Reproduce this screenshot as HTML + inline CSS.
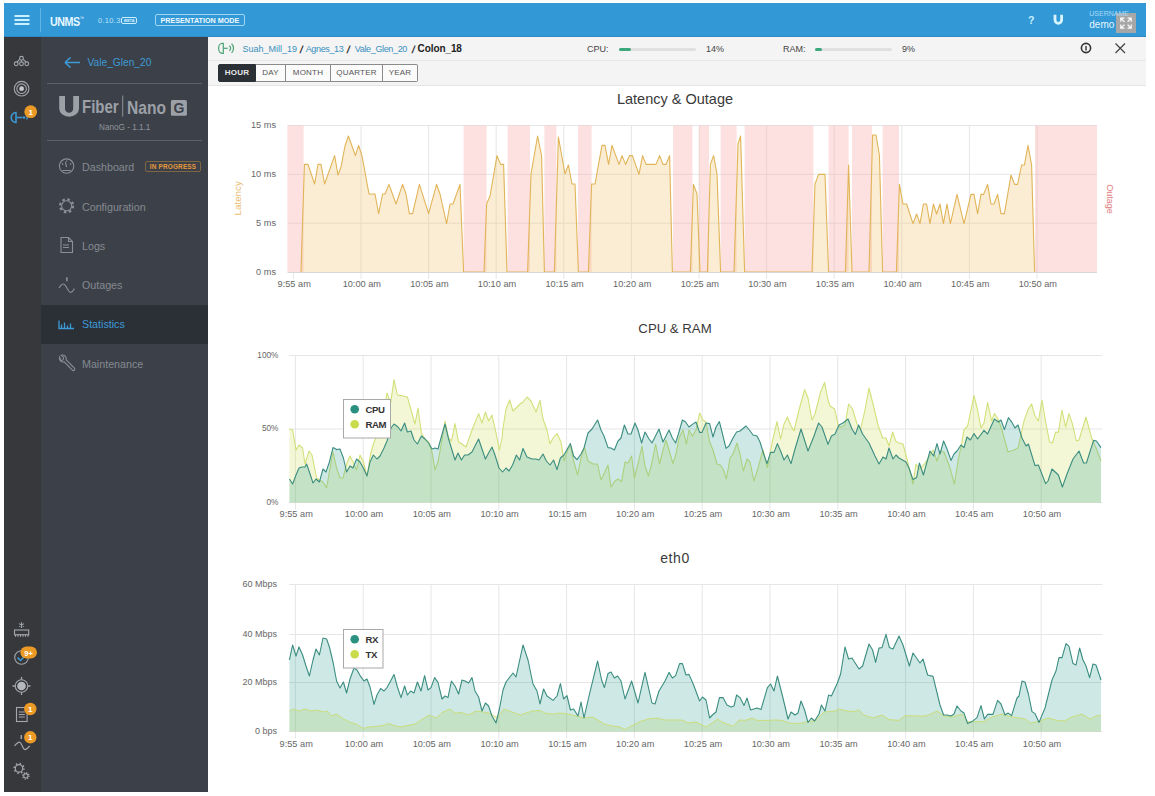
<!DOCTYPE html>
<html><head><meta charset="utf-8">
<style>
*{box-sizing:border-box;margin:0;padding:0}
html,body{width:1155px;height:796px;overflow:hidden;background:#fff;font-family:"Liberation Sans",sans-serif}
.abs{position:absolute}
#hdr{left:4px;top:3px;width:1142px;height:34px;background:#3298d6;border-bottom:1px solid #2e8ac4}
#ibar{left:4px;top:37px;width:37px;height:755px;background:#37383c}
#nav{left:41px;top:37px;width:167px;height:755px;background:#3c4149}
#content{left:208px;top:37px;width:938px;height:755px;background:#fff}
#crumbbar{left:208px;top:37px;width:938px;height:49px;background:#f4f4f4;border-bottom:1px solid #e4e4e4}
#crumbline{left:208px;top:60px;width:938px;height:1px;background:#e8e8e8}
.t{position:absolute;white-space:nowrap;line-height:1}
.menu{position:absolute;left:82px;font-size:10.7px;color:#858990}
.btn{position:absolute;top:64px;height:18px;border:1px solid #8a8a8a;border-left:none;background:#fbfbfb;color:#555;font-size:8px;text-align:center;line-height:16px;letter-spacing:0.2px}
svg{position:absolute;overflow:visible}
</style></head><body>
<div id="hdr" class="abs"></div>
<div id="ibar" class="abs"></div>
<div id="nav" class="abs"></div>
<div id="content" class="abs"></div>
<div id="crumbbar" class="abs"></div>
<div id="crumbline" class="abs"></div>

<!-- header -->
<svg style="left:0;top:0" width="1155" height="40">
  <g stroke="#c9f0ff" stroke-width="2">
    <line x1="14.5" y1="16" x2="29.5" y2="16"/><line x1="14.5" y1="20" x2="29.5" y2="20"/><line x1="14.5" y1="24" x2="29.5" y2="24"/>
  </g>
  <line x1="40.5" y1="8" x2="40.5" y2="32" stroke="#5fb5e6" stroke-width="1"/>
  <rect x="121.5" y="17.5" width="15" height="6" rx="1.5" fill="none" stroke="#cdeeff" stroke-width="1"/>
  <rect x="155.5" y="14.5" width="89" height="11" rx="1.5" fill="none" stroke="#9fd6f5" stroke-width="1"/>
  <rect x="1116" y="13" width="20" height="20" fill="#a7a7a7"/>
  <path d="M1055 14.8 v5 a3.3 3.6 0 0 0 6.6 0 v-5" stroke="#d8f4ff" stroke-width="2.8" fill="none"/>
  <g stroke="#fff" stroke-width="1.2" fill="none">
    <path d="M1120.8 21.8V18.2H1124.4M1121.2 18.6l3.2 3.2"/>
    <path d="M1131.2 21.8V18.2H1127.6M1130.8 18.6l-3.2 3.2"/>
    <path d="M1120.8 24.6V28.2H1124.4M1121.2 27.8l3.2 -3.2"/>
    <path d="M1131.2 24.6V28.2H1127.6M1130.8 27.8l-3.2 -3.2"/>
  </g>
  <circle cx="1086" cy="48" r="4.6" fill="none" stroke="#333" stroke-width="1.6"/>
  <line x1="1086" y1="46" x2="1086" y2="50.5" stroke="#333" stroke-width="1.4"/>
  <g stroke="#444" stroke-width="1.3"><line x1="1115.5" y1="43.5" x2="1125" y2="53"/><line x1="1125" y1="43.5" x2="1115.5" y2="53"/></g>
</svg>
<div class="t" style="left:50px;top:15.5px;font-size:12.8px;font-weight:700;color:#e6f7ff;letter-spacing:-0.6px;transform:scaleX(0.84);transform-origin:0 0">UNMS<span style="font-size:5px;vertical-align:top;font-weight:400">™</span></div>
<div class="t" style="left:98px;top:17px;font-size:7.5px;color:#bfe3f7;letter-spacing:0.3px">0.10.3</div>
<div class="t" style="left:124px;top:18.5px;font-size:4px;font-weight:700;color:#dff4ff">BETA</div>
<div class="t" style="left:160.5px;top:16.8px;font-size:7.2px;font-weight:700;color:#f1faff;letter-spacing:0px">PRESENTATION MODE</div>
<div class="t" style="left:1028px;top:14.8px;font-size:10.5px;color:#c9f0ff;font-weight:700">?</div>

<div class="t" style="left:1089.3px;top:10.2px;font-size:7px;color:#a9dcf7">USERNAME</div>
<div class="t" style="left:1089.3px;top:20px;font-size:10px;color:#e6f6ff">demo</div>

<!-- breadcrumb -->
<svg style="left:0;top:0" width="1155" height="90">
  <g fill="none" stroke="#4fa57a" stroke-width="1.25">
    <path d="M223.3 43.3 h-1.3 a3.4 5 0 0 0 0 10 h1.3 z"/>
    <path d="M223.5 48.3 h4.2"/>
    <path d="M229.4 45.8 a3.2 3.2 0 0 1 0 5"/>
    <path d="M231.6 43.6 a6.5 6.5 0 0 1 0 9.2"/>
  </g>
</svg>
<div class="t" style="left:242.6px;top:44.6px;font-size:9px;color:#3a8fc0">Suah_Mill_19</div>
<div class="t" style="left:299.5px;top:44px;font-size:10.5px;color:#333;font-weight:700;transform:skewX(-12deg)">/</div>
<div class="t" style="left:305.7px;top:44.6px;font-size:9px;color:#3a8fc0;letter-spacing:-0.35px">Agnes_13</div>
<div class="t" style="left:347.3px;top:44px;font-size:10.5px;color:#333;font-weight:700;transform:skewX(-12deg)">/</div>
<div class="t" style="left:354.8px;top:44.6px;font-size:9px;color:#3a8fc0;letter-spacing:-0.35px">Vale_Glen_20</div>
<div class="t" style="left:412.3px;top:44px;font-size:10.5px;color:#333;font-weight:700;transform:skewX(-12deg)">/</div>
<div class="t" style="left:417.6px;top:44px;font-size:10px;color:#222;font-weight:700;letter-spacing:-0.1px">Colon_18</div>

<div class="t" style="left:587px;top:45px;font-size:9px;color:#444">CPU:</div>
<div class="abs" style="left:619px;top:48px;width:77px;height:3px;background:#e0e0e0;border-radius:2px"></div>
<div class="abs" style="left:619px;top:48px;width:12px;height:3px;background:#3aa87a;border-radius:2px"></div>
<div class="t" style="left:706px;top:45px;font-size:9px;color:#444">14%</div>
<div class="t" style="left:783px;top:45px;font-size:9px;color:#444">RAM:</div>
<div class="abs" style="left:815px;top:48px;width:77px;height:3px;background:#e0e0e0;border-radius:2px"></div>
<div class="abs" style="left:815px;top:48px;width:7px;height:3px;background:#3aa87a;border-radius:2px"></div>
<div class="t" style="left:902px;top:45px;font-size:9px;color:#444">9%</div>

<div class="btn" style="left:218px;width:38px;border-left:1px solid #2b2f36;background:#2b2f36;color:#e8e8e8;font-weight:700;border-color:#2b2f36;border-radius:2px 0 0 2px">HOUR</div>
<div class="btn" style="left:256px;width:30px">DAY</div>
<div class="btn" style="left:285px;width:46px;border-left:1px solid #8a8a8a">MONTH</div>
<div class="btn" style="left:331px;width:52px">QUARTER</div>
<div class="btn" style="left:383px;width:35px;border-radius:0 2px 2px 0">YEAR</div>

<!-- nav panel -->
<div class="abs" style="left:47px;top:82.5px;width:155px;height:1px;background:#5b6069"></div>
<div class="abs" style="left:47px;top:140px;width:155px;height:1px;background:#5b6069"></div>
<div class="abs" style="left:41px;top:305px;width:167px;height:39px;background:#2b2f36"></div>
<svg style="left:0;top:0" width="210" height="796">
  <path d="M65 62.5h15M65 62.5l5.5-5M65 62.5l5.5 5" stroke="#3d9ad6" stroke-width="1.6" fill="none"/>
</svg>
<div class="t" style="left:87.5px;top:57.5px;font-size:10.2px;color:#3d9ad6">Vale_Glen_20</div>
<div class="t" style="left:99px;top:123.5px;font-size:8.2px;color:#8f939a">NanoG - 1.1.1</div>
<div class="menu t" style="top:161.5px">Dashboard</div>
<div class="t" style="left:145px;top:161px;width:56px;height:11px;border:1px solid #7f6642;border-radius:2px;font-size:6.4px;font-weight:700;color:#e69a3a;text-align:center;line-height:9px;letter-spacing:0.2px">IN PROGRESS</div>
<div class="menu t" style="top:201.5px">Configuration</div>
<div class="menu t" style="top:240.5px">Logs</div>
<div class="menu t" style="top:280px">Outages</div>
<div class="menu t" style="top:319px;color:#3d9ad6">Statistics</div>
<div class="menu t" style="top:358.5px">Maintenance</div>


<!-- icon bar icons -->
<svg style="left:0;top:0" width="45" height="796">
  <g fill="none" stroke="#a3a6ab" stroke-width="1.1">
    <circle cx="21.5" cy="58.3" r="1.9"/>
    <circle cx="16.2" cy="63.8" r="1.9"/><circle cx="21.5" cy="63.8" r="1.9"/><circle cx="26.8" cy="63.8" r="1.9"/>
    <path d="M19.8 59.3 L17 62 M23.2 59.3 L26 62 M21.5 60.2 V61.9"/>
    <circle cx="21.6" cy="88.7" r="7.3"/>
    <circle cx="21.6" cy="88.7" r="4.8"/>
  </g>
  <circle cx="21.6" cy="88.7" r="2.4" fill="#c8cacd"/>
  <g fill="none" stroke="#3d9ad6" stroke-width="1.5">
    <path d="M16 112.5 a4.8 5 0 0 0 0 10 z"/>
    <path d="M16.5 117.5 h6"/>
  </g>
  <circle cx="24" cy="117.5" r="1.3" fill="#3d9ad6"/>
  <path d="M26.5 115.5 a3 3 0 0 1 0 4" stroke="#3d9ad6" stroke-width="1.2" fill="none"/>
  <circle cx="30.7" cy="111.7" r="6.4" fill="#eb9a25"/>
  <text x="30.7" y="114.6" font-family="Liberation Sans" font-size="8" font-weight="700" fill="#fff" text-anchor="middle">1</text>

  <g fill="none" stroke="#a3a6ab" stroke-width="1.1">
    <path d="M21.5 622.2 v5.8 M19 623.6 l5 3 M24 623.6 l-5 3"/>
    <rect x="14.5" y="630" width="14.2" height="4.7"/>
    <path d="M15.5 634.7 v2 M18 634.7 v2 M20.5 634.7 v2 M23 634.7 v2 M25.5 634.7 v2 M28 634.7 v2"/>
    <circle cx="21.5" cy="657.5" r="6.8"/>
  </g>
  <path d="M17.5 657.5 l3 3 l5 -5" stroke="#3d9ad6" stroke-width="1.5" fill="none"/>
  <rect x="20.4" y="646.5" width="16.5" height="12" rx="6" fill="#eb9a25"/>
  <text x="28.6" y="655.5" font-family="Liberation Sans" font-size="7.5" font-weight="700" fill="#fff" text-anchor="middle">9+</text>
  <circle cx="21.5" cy="686" r="6.3" fill="none" stroke="#a3a6ab" stroke-width="1.1"/>
  <circle cx="21.5" cy="686" r="4.3" fill="#b5b8bc"/>
  <path d="M21.5 677 v3 M21.5 692 v3 M12.5 686 h3 M27.5 686 h3" stroke="#a3a6ab" stroke-width="1.3"/>
  <g fill="none" stroke="#a3a6ab" stroke-width="1.1">
    <rect x="16.5" y="707.5" width="10.6" height="14"/>
    <path d="M18.8 712 h6 M18.8 714.5 h6 M18.8 717 h6"/>
  </g>
  <circle cx="30.3" cy="709" r="6.2" fill="#eb9a25"/>
  <text x="30.3" y="711.9" font-family="Liberation Sans" font-size="8" font-weight="700" fill="#fff" text-anchor="middle">1</text>
  <g fill="none" stroke="#a3a6ab" stroke-width="1.2">
    <path d="M14.5 745.8 C16.5 743.5 18.3 741.5 19.8 742.2 C21.8 743.2 23 749.8 24.9 749.6 C26.8 749.4 28.5 747.3 29.8 745.8"/>
    <path d="M21.3 735 v4" stroke-width="1.5"/>
  </g>
  <circle cx="30.3" cy="737.3" r="6.2" fill="#eb9a25"/>
  <text x="30.3" y="740.2" font-family="Liberation Sans" font-size="8" font-weight="700" fill="#fff" text-anchor="middle">1</text>
  <g fill="none" stroke="#a3a6ab">
    <circle cx="19" cy="768.4" r="3.7" stroke-width="1.2"/>
    <circle cx="19" cy="768.4" r="4.9" stroke-width="1.5" stroke-dasharray="1.5 2.35"/>
    <circle cx="25.8" cy="775.8" r="2.2" stroke-width="1.1"/>
    <circle cx="25.8" cy="775.8" r="3.2" stroke-width="1.3" stroke-dasharray="1.1 1.41"/>
  </g>
</svg>

<!-- logo -->
<svg style="left:0;top:0" width="210" height="140">
  <path d="M59.2 96 h5.8 v12.5 a4 4.2 0 0 0 8.2 0 v-12.5 h5.8 v12.5 a9.9 8.3 0 0 1 -19.8 0 z" fill="#9ca0a7"/>
  <rect x="122.2" y="95.6" width="1" height="21" fill="#8d9198"/>
  <rect x="170.9" y="100" width="16" height="15.7" rx="1.5" fill="#9ca0a7"/>
</svg>
<div class="t" style="left:82px;top:96.6px;font-size:19px;font-weight:700;color:#9ca0a7;transform:scaleX(0.79);transform-origin:0 0">Fiber</div>
<div class="t" style="left:127px;top:97.5px;font-size:19px;font-weight:700;color:#9ca0a7;transform:scaleX(0.82);transform-origin:0 0">Nano</div>
<div class="t" style="left:173.5px;top:101.3px;font-size:14px;font-weight:700;color:#3c4149">G</div>

<!-- menu icons -->
<svg style="left:0;top:0" width="210" height="400">
  <g fill="none" stroke="#8b9098" stroke-width="1.1">
    <circle cx="66.6" cy="166.1" r="7.2"/>
    <path d="M66.6 167 l-1.2 -5 M62 163.5 l1.2 1 M71.2 163.5 l-1.2 1 M66.6 160.5 v1.2 M62.5 170.5 h8.2"/>
    <circle cx="66.6" cy="205.8" r="5"/>
    <circle cx="66.6" cy="205.8" r="6.5" stroke-width="2.2" stroke-dasharray="2.55 2.55"/>
    <path d="M61 237.5 h7.5 l4 4 v11 h-11.5 z M68.5 237.5 v4 h4"/>
    <path d="M63 245 h6 M63 247.5 h6"/>
    <path d="M59 288 C61 285 62.5 283.2 64.3 284.4 C66.5 286 68.5 292.5 70.8 292.4 C72.6 292.3 73.6 290 74.3 288.6"/>
    <path d="M66.9 277.3 v4" stroke-width="1.6"/>
    <path d="M59.6 357 a3.8 3.8 0 0 0 4.6 4.9 l8.2 8.2 a1.4 1.4 0 0 0 2 -2 l-8.2 -8.2 a3.8 3.8 0 0 0 -4.9 -4.6 l2.4 2.4 l-0.7 2.2 l-2.2 0.7 z"/>
  </g>
  <path d="M59 320.5 v8 h15 M61.5 328.5 v-4 M64.5 328.5 v-6 M67.5 328.5 v-3 M70.5 328.5 v-5" stroke="#3d9ad6" stroke-width="1.3" fill="none"/>
</svg>

<svg style="left:0;top:0" width="1155" height="796">
<line x1="287.5" y1="125.5" x2="1097" y2="125.5" stroke="#e6e6e6" stroke-width="1"/>
<line x1="287.5" y1="174.3" x2="1097" y2="174.3" stroke="#e6e6e6" stroke-width="1"/>
<line x1="287.5" y1="223.2" x2="1097" y2="223.2" stroke="#e6e6e6" stroke-width="1"/>
<line x1="293.4" y1="272" x2="293.4" y2="279" stroke="#e6e6e6" stroke-width="1"/>
<line x1="361.0" y1="125.5" x2="361.0" y2="279" stroke="#e6e6e6" stroke-width="1"/>
<line x1="428.6" y1="125.5" x2="428.6" y2="279" stroke="#e6e6e6" stroke-width="1"/>
<line x1="496.2" y1="125.5" x2="496.2" y2="279" stroke="#e6e6e6" stroke-width="1"/>
<line x1="563.8" y1="125.5" x2="563.8" y2="279" stroke="#e6e6e6" stroke-width="1"/>
<line x1="631.4" y1="125.5" x2="631.4" y2="279" stroke="#e6e6e6" stroke-width="1"/>
<line x1="699.0" y1="125.5" x2="699.0" y2="279" stroke="#e6e6e6" stroke-width="1"/>
<line x1="766.6" y1="125.5" x2="766.6" y2="279" stroke="#e6e6e6" stroke-width="1"/>
<line x1="834.2" y1="125.5" x2="834.2" y2="279" stroke="#e6e6e6" stroke-width="1"/>
<line x1="901.8" y1="125.5" x2="901.8" y2="279" stroke="#e6e6e6" stroke-width="1"/>
<line x1="969.4" y1="125.5" x2="969.4" y2="279" stroke="#e6e6e6" stroke-width="1"/>
<line x1="1037.0" y1="125.5" x2="1037.0" y2="279" stroke="#e6e6e6" stroke-width="1"/>
<rect x="287.4" y="125.5" width="16.2" height="146.5" fill="rgba(250,165,165,0.34)"/>
<rect x="463.6" y="125.5" width="23.0" height="146.5" fill="rgba(250,165,165,0.34)"/>
<rect x="507.6" y="125.5" width="22.4" height="146.5" fill="rgba(250,165,165,0.34)"/>
<rect x="544.4" y="125.5" width="12.0" height="146.5" fill="rgba(250,165,165,0.34)"/>
<rect x="578.0" y="125.5" width="13.6" height="146.5" fill="rgba(250,165,165,0.34)"/>
<rect x="673.0" y="125.5" width="19.4" height="146.5" fill="rgba(250,165,165,0.34)"/>
<rect x="699.0" y="125.5" width="10.0" height="146.5" fill="rgba(250,165,165,0.34)"/>
<rect x="720.6" y="125.5" width="16.0" height="146.5" fill="rgba(250,165,165,0.34)"/>
<rect x="744.6" y="125.5" width="68.8" height="146.5" fill="rgba(250,165,165,0.34)"/>
<rect x="828.6" y="125.5" width="20.0" height="146.5" fill="rgba(250,165,165,0.34)"/>
<rect x="852.0" y="125.5" width="20.0" height="146.5" fill="rgba(250,165,165,0.34)"/>
<rect x="882.6" y="125.5" width="16.4" height="146.5" fill="rgba(250,165,165,0.34)"/>
<rect x="1035.0" y="125.5" width="62.0" height="146.5" fill="rgba(250,165,165,0.34)"/>
<polygon points="301.0,272.0 301.0,272.0 304.4,164.4 308.0,164.4 314.6,184.0 318.0,164.4 321.0,164.4 324.6,184.0 334.6,155.6 338.0,175.0 341.0,167.0 345.0,146.0 348.4,136.0 355.4,155.6 358.6,145.4 362.0,156.0 369.0,194.0 375.0,194.0 378.6,213.6 382.6,194.0 385.0,194.0 389.0,184.4 396.0,204.0 402.6,184.4 406.0,194.0 409.4,213.6 412.6,213.6 419.4,184.4 428.6,213.6 436.6,184.4 440.0,194.0 446.6,223.6 450.0,204.0 453.0,204.0 460.0,184.4 463.6,272.0 484.0,272.0 486.6,204.0 490.0,196.0 497.0,155.6 500.6,164.4 503.6,164.4 507.0,272.0 527.6,272.0 531.0,174.0 537.6,136.0 541.6,156.0 544.4,272.0 554.4,272.0 558.4,137.0 565.0,174.0 568.4,165.0 572.0,184.0 575.0,184.0 578.4,272.0 588.4,272.0 591.6,184.0 595.0,184.0 602.0,145.4 605.0,145.4 608.6,164.4 612.0,145.4 619.0,164.4 622.0,155.6 625.6,164.4 629.6,155.6 632.4,155.6 639.0,174.4 642.6,155.6 646.0,164.4 656.0,164.4 659.6,155.6 663.0,164.4 666.0,164.4 669.6,155.6 672.4,272.0 690.4,272.0 693.4,184.4 697.0,194.0 700.0,272.0 707.4,272.0 710.4,164.4 713.6,155.6 717.0,174.0 720.6,272.0 734.0,272.0 738.0,144.0 740.6,136.0 744.6,272.0 812.0,272.0 815.0,184.0 818.6,174.4 825.0,174.4 828.6,272.0 845.4,272.0 848.6,165.0 852.0,272.0 869.0,272.0 872.6,135.0 876.0,135.0 879.4,155.0 882.6,272.0 896.4,272.0 899.4,184.4 903.0,204.0 906.6,204.0 913.0,223.6 916.6,214.0 920.0,223.6 923.4,204.0 926.6,204.0 930.0,223.6 933.4,204.0 936.6,214.0 940.0,204.0 943.4,223.6 947.0,204.0 950.4,223.6 957.0,194.4 964.0,223.6 971.0,194.4 974.0,194.4 977.6,213.6 981.0,194.4 983.6,194.4 987.6,184.4 991.0,204.0 994.0,204.0 997.6,194.4 1001.0,213.6 1004.4,213.6 1011.0,175.0 1014.6,184.4 1017.6,184.4 1021.6,165.0 1024.4,165.0 1028.0,145.4 1031.6,165.0 1034.6,272.0 1034.6,272.0" fill="rgba(243,196,110,0.30)"/>
<polyline points="301.0,272.0 304.4,164.4 308.0,164.4 314.6,184.0 318.0,164.4 321.0,164.4 324.6,184.0 334.6,155.6 338.0,175.0 341.0,167.0 345.0,146.0 348.4,136.0 355.4,155.6 358.6,145.4 362.0,156.0 369.0,194.0 375.0,194.0 378.6,213.6 382.6,194.0 385.0,194.0 389.0,184.4 396.0,204.0 402.6,184.4 406.0,194.0 409.4,213.6 412.6,213.6 419.4,184.4 428.6,213.6 436.6,184.4 440.0,194.0 446.6,223.6 450.0,204.0 453.0,204.0 460.0,184.4 463.6,272.0 484.0,272.0 486.6,204.0 490.0,196.0 497.0,155.6 500.6,164.4 503.6,164.4 507.0,272.0 527.6,272.0 531.0,174.0 537.6,136.0 541.6,156.0 544.4,272.0 554.4,272.0 558.4,137.0 565.0,174.0 568.4,165.0 572.0,184.0 575.0,184.0 578.4,272.0 588.4,272.0 591.6,184.0 595.0,184.0 602.0,145.4 605.0,145.4 608.6,164.4 612.0,145.4 619.0,164.4 622.0,155.6 625.6,164.4 629.6,155.6 632.4,155.6 639.0,174.4 642.6,155.6 646.0,164.4 656.0,164.4 659.6,155.6 663.0,164.4 666.0,164.4 669.6,155.6 672.4,272.0 690.4,272.0 693.4,184.4 697.0,194.0 700.0,272.0 707.4,272.0 710.4,164.4 713.6,155.6 717.0,174.0 720.6,272.0 734.0,272.0 738.0,144.0 740.6,136.0 744.6,272.0 812.0,272.0 815.0,184.0 818.6,174.4 825.0,174.4 828.6,272.0 845.4,272.0 848.6,165.0 852.0,272.0 869.0,272.0 872.6,135.0 876.0,135.0 879.4,155.0 882.6,272.0 896.4,272.0 899.4,184.4 903.0,204.0 906.6,204.0 913.0,223.6 916.6,214.0 920.0,223.6 923.4,204.0 926.6,204.0 930.0,223.6 933.4,204.0 936.6,214.0 940.0,204.0 943.4,223.6 947.0,204.0 950.4,223.6 957.0,194.4 964.0,223.6 971.0,194.4 974.0,194.4 977.6,213.6 981.0,194.4 983.6,194.4 987.6,184.4 991.0,204.0 994.0,204.0 997.6,194.4 1001.0,213.6 1004.4,213.6 1011.0,175.0 1014.6,184.4 1017.6,184.4 1021.6,165.0 1024.4,165.0 1028.0,145.4 1031.6,165.0 1034.6,272.0" fill="none" stroke="#e1b458" stroke-width="1.1" stroke-linejoin="round"/>
<line x1="287.5" y1="272.5" x2="1097" y2="272.5" stroke="#d8d8d8" stroke-width="1"/>
<line x1="289" y1="355.5" x2="1102.5" y2="355.5" stroke="#e6e6e6" stroke-width="1"/>
<line x1="289" y1="429.0" x2="1102.5" y2="429.0" stroke="#e6e6e6" stroke-width="1"/>
<line x1="289" y1="502.5" x2="1102.5" y2="502.5" stroke="#e6e6e6" stroke-width="1"/>
<line x1="295.4" y1="355.5" x2="295.4" y2="509.5" stroke="#e6e6e6" stroke-width="1"/>
<line x1="363.2" y1="355.5" x2="363.2" y2="509.5" stroke="#e6e6e6" stroke-width="1"/>
<line x1="431.0" y1="355.5" x2="431.0" y2="509.5" stroke="#e6e6e6" stroke-width="1"/>
<line x1="498.8" y1="355.5" x2="498.8" y2="509.5" stroke="#e6e6e6" stroke-width="1"/>
<line x1="566.6" y1="355.5" x2="566.6" y2="509.5" stroke="#e6e6e6" stroke-width="1"/>
<line x1="634.4" y1="355.5" x2="634.4" y2="509.5" stroke="#e6e6e6" stroke-width="1"/>
<line x1="702.2" y1="355.5" x2="702.2" y2="509.5" stroke="#e6e6e6" stroke-width="1"/>
<line x1="770.0" y1="355.5" x2="770.0" y2="509.5" stroke="#e6e6e6" stroke-width="1"/>
<line x1="837.8" y1="355.5" x2="837.8" y2="509.5" stroke="#e6e6e6" stroke-width="1"/>
<line x1="905.6" y1="355.5" x2="905.6" y2="509.5" stroke="#e6e6e6" stroke-width="1"/>
<line x1="973.4" y1="355.5" x2="973.4" y2="509.5" stroke="#e6e6e6" stroke-width="1"/>
<line x1="1041.2" y1="355.5" x2="1041.2" y2="509.5" stroke="#e6e6e6" stroke-width="1"/>
<polygon points="289.4,502.5 289.4,429.0 292.6,430.0 296.0,450.0 299.0,445.0 302.6,448.0 305.0,464.0 309.0,451.0 312.0,455.0 316.6,478.0 319.4,480.0 323.0,482.0 326.6,488.0 329.4,472.0 333.0,452.0 336.6,468.0 340.0,478.0 343.0,478.0 346.6,464.0 350.0,456.0 353.0,462.0 356.6,470.0 360.0,455.0 363.4,462.0 367.0,476.0 370.6,454.0 374.0,442.0 378.0,434.0 381.0,420.0 384.6,408.0 387.0,393.0 390.6,403.0 394.0,379.6 397.4,395.0 401.0,395.6 407.4,397.0 415.0,424.0 418.0,408.0 421.4,433.0 425.0,439.0 428.6,442.0 432.0,452.0 435.0,470.0 438.0,462.0 442.0,440.0 445.0,421.0 448.6,438.0 451.4,441.0 455.0,423.6 458.6,442.0 462.0,444.0 466.0,447.0 472.0,430.0 478.6,413.6 482.0,423.0 485.4,412.0 488.6,421.0 492.0,415.0 495.4,430.0 499.4,450.0 502.0,438.0 503.0,428.0 506.0,409.0 509.6,400.0 513.0,411.0 517.0,407.0 520.0,404.0 523.0,402.0 527.0,397.0 531.0,401.0 536.0,412.0 540.0,400.4 543.0,419.0 547.0,430.0 550.0,444.0 553.0,438.0 557.0,433.6 561.0,442.0 564.0,461.0 567.6,450.0 570.4,446.0 573.6,461.0 577.6,475.0 581.0,458.0 584.4,447.0 588.0,461.0 593.0,464.0 597.6,464.0 601.0,480.0 604.4,473.0 608.0,465.0 611.0,487.0 615.0,481.0 618.0,479.0 621.6,481.6 625.0,462.0 628.0,463.0 631.6,456.0 634.4,478.0 638.4,462.0 642.0,446.0 645.0,466.0 648.4,476.0 651.6,464.0 655.6,444.0 659.6,464.0 663.0,450.0 666.0,440.0 669.0,450.0 673.0,463.6 676.0,454.0 679.0,438.0 683.0,430.0 686.4,444.0 689.0,430.0 692.4,436.0 696.0,430.0 699.6,413.0 703.0,420.0 706.0,422.0 709.6,442.0 713.0,450.0 717.0,464.0 720.4,465.0 723.6,470.0 726.4,479.0 730.0,458.0 733.0,454.0 737.0,443.0 740.0,454.0 743.4,471.0 747.0,459.0 750.0,462.0 754.0,481.0 758.0,468.0 763.0,450.0 767.4,467.6 772.0,443.0 777.0,421.6 780.6,439.0 784.0,424.0 787.4,417.0 790.6,425.0 794.0,431.0 799.0,410.0 804.6,389.6 808.0,398.0 812.0,420.0 815.0,414.0 820.6,392.0 824.6,382.4 828.0,400.0 830.0,406.0 834.6,409.0 838.6,426.4 841.4,427.0 845.0,425.0 848.6,404.0 852.6,409.0 857.0,424.0 860.6,429.0 865.0,410.0 869.0,388.0 874.0,408.0 878.0,425.0 882.6,438.0 886.0,438.0 889.0,446.0 892.6,432.0 896.0,441.6 899.0,443.0 903.0,444.0 907.0,459.0 913.0,484.0 916.0,464.0 919.0,469.0 923.0,466.0 928.4,458.0 933.0,450.0 937.0,461.0 940.4,451.0 944.0,452.0 950.0,468.0 954.4,484.0 958.4,459.0 961.6,444.0 964.0,429.6 967.6,426.0 974.0,395.6 977.6,410.0 981.0,428.0 984.0,423.0 987.6,402.4 991.6,421.0 994.4,413.6 997.6,418.0 1002.0,430.0 1008.0,452.0 1014.0,450.0 1018.0,448.0 1024.0,421.0 1028.0,409.6 1031.6,404.0 1035.0,416.0 1038.4,421.0 1042.0,400.0 1045.6,422.0 1049.6,442.0 1052.4,443.0 1055.6,432.0 1058.4,432.4 1062.0,410.0 1065.6,427.0 1069.0,413.6 1072.4,423.6 1076.4,441.0 1079.0,440.0 1086.0,417.0 1091.6,438.0 1096.0,448.0 1101.0,461.0 1101.0,502.5" fill="rgba(200,220,70,0.22)"/>
<polyline points="289.4,429.0 292.6,430.0 296.0,450.0 299.0,445.0 302.6,448.0 305.0,464.0 309.0,451.0 312.0,455.0 316.6,478.0 319.4,480.0 323.0,482.0 326.6,488.0 329.4,472.0 333.0,452.0 336.6,468.0 340.0,478.0 343.0,478.0 346.6,464.0 350.0,456.0 353.0,462.0 356.6,470.0 360.0,455.0 363.4,462.0 367.0,476.0 370.6,454.0 374.0,442.0 378.0,434.0 381.0,420.0 384.6,408.0 387.0,393.0 390.6,403.0 394.0,379.6 397.4,395.0 401.0,395.6 407.4,397.0 415.0,424.0 418.0,408.0 421.4,433.0 425.0,439.0 428.6,442.0 432.0,452.0 435.0,470.0 438.0,462.0 442.0,440.0 445.0,421.0 448.6,438.0 451.4,441.0 455.0,423.6 458.6,442.0 462.0,444.0 466.0,447.0 472.0,430.0 478.6,413.6 482.0,423.0 485.4,412.0 488.6,421.0 492.0,415.0 495.4,430.0 499.4,450.0 502.0,438.0 503.0,428.0 506.0,409.0 509.6,400.0 513.0,411.0 517.0,407.0 520.0,404.0 523.0,402.0 527.0,397.0 531.0,401.0 536.0,412.0 540.0,400.4 543.0,419.0 547.0,430.0 550.0,444.0 553.0,438.0 557.0,433.6 561.0,442.0 564.0,461.0 567.6,450.0 570.4,446.0 573.6,461.0 577.6,475.0 581.0,458.0 584.4,447.0 588.0,461.0 593.0,464.0 597.6,464.0 601.0,480.0 604.4,473.0 608.0,465.0 611.0,487.0 615.0,481.0 618.0,479.0 621.6,481.6 625.0,462.0 628.0,463.0 631.6,456.0 634.4,478.0 638.4,462.0 642.0,446.0 645.0,466.0 648.4,476.0 651.6,464.0 655.6,444.0 659.6,464.0 663.0,450.0 666.0,440.0 669.0,450.0 673.0,463.6 676.0,454.0 679.0,438.0 683.0,430.0 686.4,444.0 689.0,430.0 692.4,436.0 696.0,430.0 699.6,413.0 703.0,420.0 706.0,422.0 709.6,442.0 713.0,450.0 717.0,464.0 720.4,465.0 723.6,470.0 726.4,479.0 730.0,458.0 733.0,454.0 737.0,443.0 740.0,454.0 743.4,471.0 747.0,459.0 750.0,462.0 754.0,481.0 758.0,468.0 763.0,450.0 767.4,467.6 772.0,443.0 777.0,421.6 780.6,439.0 784.0,424.0 787.4,417.0 790.6,425.0 794.0,431.0 799.0,410.0 804.6,389.6 808.0,398.0 812.0,420.0 815.0,414.0 820.6,392.0 824.6,382.4 828.0,400.0 830.0,406.0 834.6,409.0 838.6,426.4 841.4,427.0 845.0,425.0 848.6,404.0 852.6,409.0 857.0,424.0 860.6,429.0 865.0,410.0 869.0,388.0 874.0,408.0 878.0,425.0 882.6,438.0 886.0,438.0 889.0,446.0 892.6,432.0 896.0,441.6 899.0,443.0 903.0,444.0 907.0,459.0 913.0,484.0 916.0,464.0 919.0,469.0 923.0,466.0 928.4,458.0 933.0,450.0 937.0,461.0 940.4,451.0 944.0,452.0 950.0,468.0 954.4,484.0 958.4,459.0 961.6,444.0 964.0,429.6 967.6,426.0 974.0,395.6 977.6,410.0 981.0,428.0 984.0,423.0 987.6,402.4 991.6,421.0 994.4,413.6 997.6,418.0 1002.0,430.0 1008.0,452.0 1014.0,450.0 1018.0,448.0 1024.0,421.0 1028.0,409.6 1031.6,404.0 1035.0,416.0 1038.4,421.0 1042.0,400.0 1045.6,422.0 1049.6,442.0 1052.4,443.0 1055.6,432.0 1058.4,432.4 1062.0,410.0 1065.6,427.0 1069.0,413.6 1072.4,423.6 1076.4,441.0 1079.0,440.0 1086.0,417.0 1091.6,438.0 1096.0,448.0 1101.0,461.0" fill="none" stroke="#d2e07a" stroke-width="1.1" stroke-linejoin="round"/>
<polygon points="289.4,502.5 289.4,479.0 292.6,484.0 296.0,475.0 299.0,468.0 302.0,467.0 305.0,467.0 306.6,464.0 309.4,472.0 313.0,483.0 316.0,479.0 319.4,482.0 323.0,469.0 326.0,472.0 329.4,462.0 333.0,447.6 336.6,449.6 340.0,449.0 343.4,458.0 346.6,472.0 350.0,466.0 353.0,468.0 356.6,459.0 360.0,462.0 363.4,468.0 367.0,476.0 370.0,462.0 373.4,455.0 377.0,459.0 380.0,456.0 384.0,448.0 387.0,441.0 391.0,428.0 394.0,424.0 398.0,427.0 401.0,431.0 404.6,423.0 407.4,432.0 411.0,431.0 414.0,440.0 417.4,444.0 421.4,436.0 425.0,439.0 428.6,443.0 432.0,449.0 435.0,448.0 438.0,449.0 441.0,438.0 445.0,424.0 448.6,439.0 452.0,450.0 455.0,460.0 458.0,453.0 461.4,460.0 464.6,455.0 468.0,455.0 472.0,452.0 475.0,446.0 478.6,439.0 482.0,449.0 485.4,459.0 488.6,453.0 492.0,447.0 495.0,455.0 499.0,468.0 502.6,472.0 506.0,468.0 509.0,471.0 512.6,465.0 516.4,455.0 519.6,460.0 523.0,448.4 527.0,457.0 532.0,459.0 536.0,459.0 539.0,460.0 543.0,454.0 546.4,461.0 550.0,465.0 553.6,460.0 557.0,469.6 560.4,458.0 564.0,455.0 570.4,443.6 573.6,456.0 577.0,459.6 581.0,454.0 584.0,448.0 588.0,433.0 592.0,429.0 597.6,420.0 601.0,430.0 604.0,436.0 608.0,447.6 611.0,448.0 614.4,450.0 618.0,441.0 621.0,438.0 624.4,425.0 628.0,434.0 631.0,434.0 635.0,423.0 638.0,430.0 641.6,443.0 645.0,432.0 649.0,439.0 652.0,443.0 659.0,429.0 663.0,442.0 669.0,430.0 672.4,438.0 675.6,443.0 679.0,432.0 682.4,420.0 685.6,422.0 689.0,427.0 692.4,424.4 696.0,422.0 699.6,432.4 702.0,432.4 706.0,423.0 709.6,423.6 713.0,437.0 716.0,427.0 719.4,421.6 723.0,436.0 726.0,448.4 729.0,446.0 733.0,438.0 736.6,432.0 740.0,431.0 746.0,426.0 749.4,430.0 753.0,435.0 757.0,436.0 760.0,442.0 763.4,453.0 767.0,463.6 770.6,452.4 774.0,452.4 777.4,443.6 781.0,452.0 784.0,460.0 787.4,455.0 791.0,463.6 795.0,449.0 801.0,429.0 808.0,451.0 814.0,436.0 818.6,423.0 822.0,427.0 828.0,444.4 831.4,436.0 835.0,434.0 839.0,425.0 843.0,423.0 848.0,419.0 852.0,429.0 855.4,434.4 858.6,425.0 862.6,434.0 869.0,443.0 875.0,456.0 879.0,464.0 883.0,457.0 886.0,459.0 889.0,448.0 893.0,459.0 896.0,455.0 899.0,458.0 906.0,462.0 909.0,468.0 913.0,479.6 916.6,477.6 919.4,463.0 923.4,475.0 930.0,451.0 933.6,456.0 937.0,443.6 940.0,454.0 943.6,441.0 947.0,449.0 951.0,460.4 954.0,454.0 957.0,451.0 961.0,445.0 964.0,447.6 967.0,437.0 970.4,440.0 974.0,433.6 977.6,439.0 984.0,430.4 987.6,434.0 994.4,419.0 998.4,422.0 1001.0,420.0 1004.4,429.6 1008.4,417.6 1012.0,422.4 1015.0,428.0 1018.0,425.0 1022.0,438.0 1026.0,446.0 1028.4,444.0 1035.0,465.6 1038.4,465.0 1045.6,483.6 1048.0,481.0 1052.0,469.0 1058.4,475.0 1062.4,487.0 1067.0,474.0 1073.0,459.0 1079.0,451.0 1083.6,463.0 1086.4,463.0 1093.6,440.4 1096.4,441.0 1101.0,447.6 1101.0,502.5" fill="rgba(42,157,143,0.23)"/>
<polyline points="289.4,479.0 292.6,484.0 296.0,475.0 299.0,468.0 302.0,467.0 305.0,467.0 306.6,464.0 309.4,472.0 313.0,483.0 316.0,479.0 319.4,482.0 323.0,469.0 326.0,472.0 329.4,462.0 333.0,447.6 336.6,449.6 340.0,449.0 343.4,458.0 346.6,472.0 350.0,466.0 353.0,468.0 356.6,459.0 360.0,462.0 363.4,468.0 367.0,476.0 370.0,462.0 373.4,455.0 377.0,459.0 380.0,456.0 384.0,448.0 387.0,441.0 391.0,428.0 394.0,424.0 398.0,427.0 401.0,431.0 404.6,423.0 407.4,432.0 411.0,431.0 414.0,440.0 417.4,444.0 421.4,436.0 425.0,439.0 428.6,443.0 432.0,449.0 435.0,448.0 438.0,449.0 441.0,438.0 445.0,424.0 448.6,439.0 452.0,450.0 455.0,460.0 458.0,453.0 461.4,460.0 464.6,455.0 468.0,455.0 472.0,452.0 475.0,446.0 478.6,439.0 482.0,449.0 485.4,459.0 488.6,453.0 492.0,447.0 495.0,455.0 499.0,468.0 502.6,472.0 506.0,468.0 509.0,471.0 512.6,465.0 516.4,455.0 519.6,460.0 523.0,448.4 527.0,457.0 532.0,459.0 536.0,459.0 539.0,460.0 543.0,454.0 546.4,461.0 550.0,465.0 553.6,460.0 557.0,469.6 560.4,458.0 564.0,455.0 570.4,443.6 573.6,456.0 577.0,459.6 581.0,454.0 584.0,448.0 588.0,433.0 592.0,429.0 597.6,420.0 601.0,430.0 604.0,436.0 608.0,447.6 611.0,448.0 614.4,450.0 618.0,441.0 621.0,438.0 624.4,425.0 628.0,434.0 631.0,434.0 635.0,423.0 638.0,430.0 641.6,443.0 645.0,432.0 649.0,439.0 652.0,443.0 659.0,429.0 663.0,442.0 669.0,430.0 672.4,438.0 675.6,443.0 679.0,432.0 682.4,420.0 685.6,422.0 689.0,427.0 692.4,424.4 696.0,422.0 699.6,432.4 702.0,432.4 706.0,423.0 709.6,423.6 713.0,437.0 716.0,427.0 719.4,421.6 723.0,436.0 726.0,448.4 729.0,446.0 733.0,438.0 736.6,432.0 740.0,431.0 746.0,426.0 749.4,430.0 753.0,435.0 757.0,436.0 760.0,442.0 763.4,453.0 767.0,463.6 770.6,452.4 774.0,452.4 777.4,443.6 781.0,452.0 784.0,460.0 787.4,455.0 791.0,463.6 795.0,449.0 801.0,429.0 808.0,451.0 814.0,436.0 818.6,423.0 822.0,427.0 828.0,444.4 831.4,436.0 835.0,434.0 839.0,425.0 843.0,423.0 848.0,419.0 852.0,429.0 855.4,434.4 858.6,425.0 862.6,434.0 869.0,443.0 875.0,456.0 879.0,464.0 883.0,457.0 886.0,459.0 889.0,448.0 893.0,459.0 896.0,455.0 899.0,458.0 906.0,462.0 909.0,468.0 913.0,479.6 916.6,477.6 919.4,463.0 923.4,475.0 930.0,451.0 933.6,456.0 937.0,443.6 940.0,454.0 943.6,441.0 947.0,449.0 951.0,460.4 954.0,454.0 957.0,451.0 961.0,445.0 964.0,447.6 967.0,437.0 970.4,440.0 974.0,433.6 977.6,439.0 984.0,430.4 987.6,434.0 994.4,419.0 998.4,422.0 1001.0,420.0 1004.4,429.6 1008.4,417.6 1012.0,422.4 1015.0,428.0 1018.0,425.0 1022.0,438.0 1026.0,446.0 1028.4,444.0 1035.0,465.6 1038.4,465.0 1045.6,483.6 1048.0,481.0 1052.0,469.0 1058.4,475.0 1062.4,487.0 1067.0,474.0 1073.0,459.0 1079.0,451.0 1083.6,463.0 1086.4,463.0 1093.6,440.4 1096.4,441.0 1101.0,447.6" fill="none" stroke="#3b8d80" stroke-width="1.1" stroke-linejoin="round"/>
<line x1="289" y1="584.5" x2="1102.5" y2="584.5" stroke="#e6e6e6" stroke-width="1"/>
<line x1="289" y1="634.5" x2="1102.5" y2="634.5" stroke="#e6e6e6" stroke-width="1"/>
<line x1="289" y1="682.5" x2="1102.5" y2="682.5" stroke="#e6e6e6" stroke-width="1"/>
<line x1="289" y1="731.5" x2="1102.5" y2="731.5" stroke="#e6e6e6" stroke-width="1"/>
<line x1="295.4" y1="584.5" x2="295.4" y2="738.5" stroke="#e6e6e6" stroke-width="1"/>
<line x1="363.2" y1="584.5" x2="363.2" y2="738.5" stroke="#e6e6e6" stroke-width="1"/>
<line x1="431.0" y1="584.5" x2="431.0" y2="738.5" stroke="#e6e6e6" stroke-width="1"/>
<line x1="498.8" y1="584.5" x2="498.8" y2="738.5" stroke="#e6e6e6" stroke-width="1"/>
<line x1="566.6" y1="584.5" x2="566.6" y2="738.5" stroke="#e6e6e6" stroke-width="1"/>
<line x1="634.4" y1="584.5" x2="634.4" y2="738.5" stroke="#e6e6e6" stroke-width="1"/>
<line x1="702.2" y1="584.5" x2="702.2" y2="738.5" stroke="#e6e6e6" stroke-width="1"/>
<line x1="770.0" y1="584.5" x2="770.0" y2="738.5" stroke="#e6e6e6" stroke-width="1"/>
<line x1="837.8" y1="584.5" x2="837.8" y2="738.5" stroke="#e6e6e6" stroke-width="1"/>
<line x1="905.6" y1="584.5" x2="905.6" y2="738.5" stroke="#e6e6e6" stroke-width="1"/>
<line x1="973.4" y1="584.5" x2="973.4" y2="738.5" stroke="#e6e6e6" stroke-width="1"/>
<line x1="1041.2" y1="584.5" x2="1041.2" y2="738.5" stroke="#e6e6e6" stroke-width="1"/>
<polygon points="289.4,731.5 289.4,711.0 292.6,709.0 296.0,710.0 299.4,711.0 305.0,709.0 311.0,711.0 317.0,710.0 323.0,712.0 327.0,711.0 331.4,716.0 336.6,714.0 342.0,718.0 349.0,722.0 356.0,724.0 363.4,728.4 369.0,727.0 376.0,726.4 383.0,725.6 389.0,723.6 394.0,725.6 400.0,727.0 407.0,725.6 415.0,724.0 421.0,720.0 429.0,715.0 436.0,718.0 443.0,712.0 450.0,709.0 455.0,713.0 461.0,712.4 468.0,715.0 476.0,711.0 483.0,712.0 489.0,713.0 494.0,716.0 497.4,717.6 503.0,710.0 504.0,709.0 512.0,712.0 520.0,715.0 526.0,713.0 533.0,711.0 540.0,710.4 546.0,713.6 554.0,714.0 560.0,713.0 568.0,714.0 576.0,716.0 584.0,718.0 592.0,717.0 598.0,720.0 604.0,724.0 612.0,726.0 620.0,727.0 625.0,729.6 632.0,725.6 640.0,721.6 648.0,719.0 658.0,718.0 664.0,720.0 672.0,720.0 682.0,720.0 688.0,723.0 696.0,722.0 706.0,727.0 718.0,719.0 721.0,721.6 733.0,726.4 739.0,720.0 745.0,720.4 752.0,718.0 757.0,720.4 767.0,720.4 775.0,720.0 782.0,720.4 789.0,723.0 799.0,723.6 807.4,721.6 815.0,721.0 824.0,712.0 835.0,711.0 839.0,709.0 847.0,711.0 855.0,711.6 858.6,709.6 864.0,715.0 873.0,718.0 882.0,715.0 889.0,719.6 899.0,720.4 905.0,715.6 915.0,716.0 925.0,716.0 930.0,714.4 937.0,711.0 944.0,716.0 952.0,717.0 962.0,714.0 968.0,722.0 974.0,721.6 984.0,721.6 992.0,717.0 1002.0,714.0 1012.0,717.0 1020.0,718.0 1025.0,719.0 1030.0,723.0 1038.0,721.6 1048.0,718.0 1057.0,720.4 1064.0,721.0 1072.0,717.0 1082.0,714.0 1090.0,719.0 1096.0,716.0 1101.0,715.0 1101.0,731.5" fill="rgba(200,220,70,0.22)"/>
<polygon points="289.4,731.5 289.4,660.0 292.6,645.0 296.0,656.0 299.0,647.0 302.6,655.0 306.0,666.0 309.4,676.0 313.0,660.0 316.0,649.0 319.4,655.0 323.0,638.0 326.6,639.0 329.4,647.0 333.0,662.0 336.6,681.0 340.0,688.0 343.4,682.0 346.6,693.0 350.0,679.0 354.0,668.0 357.0,670.0 360.6,676.4 364.0,681.0 367.0,679.0 370.0,687.0 374.0,704.4 377.0,695.0 380.6,688.4 384.0,691.0 387.0,687.6 390.6,681.0 394.0,674.4 397.4,687.0 401.0,697.6 404.6,686.0 407.4,695.0 410.6,691.0 414.0,693.0 417.4,682.0 421.0,691.0 424.6,675.6 428.0,690.0 431.0,687.6 434.6,677.6 438.0,682.4 442.0,699.0 445.0,696.0 448.0,697.6 451.4,681.0 455.0,686.0 458.6,694.0 462.0,680.0 465.0,681.0 468.6,683.0 472.0,677.6 475.0,691.0 478.6,697.0 482.0,711.0 485.4,703.0 488.6,706.0 492.0,716.0 496.0,723.0 499.4,709.0 503.0,690.0 506.0,682.0 513.0,673.0 516.0,677.0 523.0,645.0 528.0,660.0 533.0,684.0 537.0,691.0 540.0,704.0 543.6,689.0 547.0,696.0 553.0,700.4 557.0,696.0 560.4,683.6 563.6,699.0 567.0,695.6 570.4,710.0 573.6,709.0 578.0,716.0 581.0,702.0 584.0,718.0 589.0,696.0 597.6,661.0 601.6,680.0 604.4,687.6 608.0,673.6 611.0,672.0 614.4,678.0 617.6,676.0 621.0,681.0 625.0,699.0 631.6,681.0 638.0,703.0 645.0,672.4 652.0,703.0 655.0,704.0 659.0,691.0 665.0,681.0 669.0,672.4 672.4,678.0 675.6,675.6 679.6,663.6 682.4,663.6 686.0,675.0 689.0,674.4 693.6,685.0 699.6,701.0 702.4,697.0 706.0,700.0 709.6,718.0 712.4,715.0 716.0,712.0 719.4,697.6 723.0,697.6 727.0,705.0 731.0,707.0 734.0,706.0 736.6,695.0 740.0,697.6 744.0,705.6 747.0,698.0 750.6,710.0 757.0,708.0 761.0,709.6 767.4,687.6 770.6,684.0 774.0,691.0 777.4,676.0 782.0,694.0 788.0,719.0 791.0,712.0 795.0,715.0 798.0,713.0 801.0,701.0 804.6,710.0 808.0,722.4 811.4,718.0 814.6,721.0 819.0,714.0 821.4,705.0 825.0,711.0 828.6,695.0 831.4,696.0 837.4,683.0 840.6,674.0 845.0,647.0 848.6,659.0 852.0,658.0 859.0,669.0 862.6,666.0 869.0,644.0 872.6,650.0 875.6,662.4 879.0,648.0 882.0,647.6 886.0,634.4 889.4,647.6 893.0,649.0 899.0,636.0 903.0,645.0 909.4,666.0 913.0,653.0 920.0,663.0 923.0,659.0 927.6,675.0 933.0,676.4 940.0,705.0 943.6,715.0 947.0,715.0 951.0,716.0 954.0,714.0 957.0,706.0 961.0,711.0 964.0,713.0 967.6,723.6 972.0,721.6 977.0,717.6 981.0,705.6 984.4,719.0 987.6,714.4 993.0,714.4 997.6,700.4 1001.0,704.0 1005.0,715.0 1008.0,713.0 1011.6,715.6 1017.0,698.0 1019.0,696.0 1022.0,681.0 1025.0,682.0 1028.4,694.0 1032.0,711.6 1035.0,713.6 1039.0,722.4 1045.0,708.0 1052.0,680.0 1056.0,671.0 1059.0,657.6 1062.0,657.6 1066.0,643.6 1069.0,646.4 1073.0,663.6 1076.0,665.0 1079.6,648.0 1083.0,660.0 1086.0,666.0 1089.6,677.6 1093.0,664.0 1096.0,665.0 1101.0,680.0 1101.0,731.5" fill="rgba(42,157,143,0.23)"/>
<polyline points="289.4,711.0 292.6,709.0 296.0,710.0 299.4,711.0 305.0,709.0 311.0,711.0 317.0,710.0 323.0,712.0 327.0,711.0 331.4,716.0 336.6,714.0 342.0,718.0 349.0,722.0 356.0,724.0 363.4,728.4 369.0,727.0 376.0,726.4 383.0,725.6 389.0,723.6 394.0,725.6 400.0,727.0 407.0,725.6 415.0,724.0 421.0,720.0 429.0,715.0 436.0,718.0 443.0,712.0 450.0,709.0 455.0,713.0 461.0,712.4 468.0,715.0 476.0,711.0 483.0,712.0 489.0,713.0 494.0,716.0 497.4,717.6 503.0,710.0 504.0,709.0 512.0,712.0 520.0,715.0 526.0,713.0 533.0,711.0 540.0,710.4 546.0,713.6 554.0,714.0 560.0,713.0 568.0,714.0 576.0,716.0 584.0,718.0 592.0,717.0 598.0,720.0 604.0,724.0 612.0,726.0 620.0,727.0 625.0,729.6 632.0,725.6 640.0,721.6 648.0,719.0 658.0,718.0 664.0,720.0 672.0,720.0 682.0,720.0 688.0,723.0 696.0,722.0 706.0,727.0 718.0,719.0 721.0,721.6 733.0,726.4 739.0,720.0 745.0,720.4 752.0,718.0 757.0,720.4 767.0,720.4 775.0,720.0 782.0,720.4 789.0,723.0 799.0,723.6 807.4,721.6 815.0,721.0 824.0,712.0 835.0,711.0 839.0,709.0 847.0,711.0 855.0,711.6 858.6,709.6 864.0,715.0 873.0,718.0 882.0,715.0 889.0,719.6 899.0,720.4 905.0,715.6 915.0,716.0 925.0,716.0 930.0,714.4 937.0,711.0 944.0,716.0 952.0,717.0 962.0,714.0 968.0,722.0 974.0,721.6 984.0,721.6 992.0,717.0 1002.0,714.0 1012.0,717.0 1020.0,718.0 1025.0,719.0 1030.0,723.0 1038.0,721.6 1048.0,718.0 1057.0,720.4 1064.0,721.0 1072.0,717.0 1082.0,714.0 1090.0,719.0 1096.0,716.0 1101.0,715.0" fill="none" stroke="#cadd7c" stroke-width="1" stroke-linejoin="round"/>
<polyline points="289.4,660.0 292.6,645.0 296.0,656.0 299.0,647.0 302.6,655.0 306.0,666.0 309.4,676.0 313.0,660.0 316.0,649.0 319.4,655.0 323.0,638.0 326.6,639.0 329.4,647.0 333.0,662.0 336.6,681.0 340.0,688.0 343.4,682.0 346.6,693.0 350.0,679.0 354.0,668.0 357.0,670.0 360.6,676.4 364.0,681.0 367.0,679.0 370.0,687.0 374.0,704.4 377.0,695.0 380.6,688.4 384.0,691.0 387.0,687.6 390.6,681.0 394.0,674.4 397.4,687.0 401.0,697.6 404.6,686.0 407.4,695.0 410.6,691.0 414.0,693.0 417.4,682.0 421.0,691.0 424.6,675.6 428.0,690.0 431.0,687.6 434.6,677.6 438.0,682.4 442.0,699.0 445.0,696.0 448.0,697.6 451.4,681.0 455.0,686.0 458.6,694.0 462.0,680.0 465.0,681.0 468.6,683.0 472.0,677.6 475.0,691.0 478.6,697.0 482.0,711.0 485.4,703.0 488.6,706.0 492.0,716.0 496.0,723.0 499.4,709.0 503.0,690.0 506.0,682.0 513.0,673.0 516.0,677.0 523.0,645.0 528.0,660.0 533.0,684.0 537.0,691.0 540.0,704.0 543.6,689.0 547.0,696.0 553.0,700.4 557.0,696.0 560.4,683.6 563.6,699.0 567.0,695.6 570.4,710.0 573.6,709.0 578.0,716.0 581.0,702.0 584.0,718.0 589.0,696.0 597.6,661.0 601.6,680.0 604.4,687.6 608.0,673.6 611.0,672.0 614.4,678.0 617.6,676.0 621.0,681.0 625.0,699.0 631.6,681.0 638.0,703.0 645.0,672.4 652.0,703.0 655.0,704.0 659.0,691.0 665.0,681.0 669.0,672.4 672.4,678.0 675.6,675.6 679.6,663.6 682.4,663.6 686.0,675.0 689.0,674.4 693.6,685.0 699.6,701.0 702.4,697.0 706.0,700.0 709.6,718.0 712.4,715.0 716.0,712.0 719.4,697.6 723.0,697.6 727.0,705.0 731.0,707.0 734.0,706.0 736.6,695.0 740.0,697.6 744.0,705.6 747.0,698.0 750.6,710.0 757.0,708.0 761.0,709.6 767.4,687.6 770.6,684.0 774.0,691.0 777.4,676.0 782.0,694.0 788.0,719.0 791.0,712.0 795.0,715.0 798.0,713.0 801.0,701.0 804.6,710.0 808.0,722.4 811.4,718.0 814.6,721.0 819.0,714.0 821.4,705.0 825.0,711.0 828.6,695.0 831.4,696.0 837.4,683.0 840.6,674.0 845.0,647.0 848.6,659.0 852.0,658.0 859.0,669.0 862.6,666.0 869.0,644.0 872.6,650.0 875.6,662.4 879.0,648.0 882.0,647.6 886.0,634.4 889.4,647.6 893.0,649.0 899.0,636.0 903.0,645.0 909.4,666.0 913.0,653.0 920.0,663.0 923.0,659.0 927.6,675.0 933.0,676.4 940.0,705.0 943.6,715.0 947.0,715.0 951.0,716.0 954.0,714.0 957.0,706.0 961.0,711.0 964.0,713.0 967.6,723.6 972.0,721.6 977.0,717.6 981.0,705.6 984.4,719.0 987.6,714.4 993.0,714.4 997.6,700.4 1001.0,704.0 1005.0,715.0 1008.0,713.0 1011.6,715.6 1017.0,698.0 1019.0,696.0 1022.0,681.0 1025.0,682.0 1028.4,694.0 1032.0,711.6 1035.0,713.6 1039.0,722.4 1045.0,708.0 1052.0,680.0 1056.0,671.0 1059.0,657.6 1062.0,657.6 1066.0,643.6 1069.0,646.4 1073.0,663.6 1076.0,665.0 1079.6,648.0 1083.0,660.0 1086.0,666.0 1089.6,677.6 1093.0,664.0 1096.0,665.0 1101.0,680.0" fill="none" stroke="#3b8d80" stroke-width="1.1" stroke-linejoin="round"/>
<rect x="343.5" y="399.5" width="47" height="38.5" fill="#fff" stroke="#a8a8a8" stroke-width="1"/>
<circle cx="354.7" cy="409.3" r="4.3" fill="#2a9080"/>
<circle cx="354.7" cy="424.3" r="4.3" fill="#c9db4a"/>
<text x="365.5" y="413.0" font-family="Liberation Sans" font-size="9.6" font-weight="700" fill="#333" letter-spacing="-0.4">CPU</text>
<text x="365.5" y="428.4" font-family="Liberation Sans" font-size="9.6" font-weight="700" fill="#333" letter-spacing="-0.4">RAM</text>
<rect x="343.5" y="629.5" width="39.5" height="38.5" fill="#fff" stroke="#a8a8a8" stroke-width="1"/>
<circle cx="354.7" cy="639.3" r="4.3" fill="#2a9080"/>
<circle cx="354.7" cy="654.3" r="4.3" fill="#c9db4a"/>
<text x="365.5" y="643.0" font-family="Liberation Sans" font-size="9.6" font-weight="700" fill="#333" letter-spacing="-0.4">RX</text>
<text x="365.5" y="658.4" font-family="Liberation Sans" font-size="9.6" font-weight="700" fill="#333" letter-spacing="-0.4">TX</text>
<text x="675" y="103.7" font-family="Liberation Sans" font-size="14.5" fill="#3a3a3a" text-anchor="middle" >Latency &amp; Outage</text>
<text x="675" y="333.2" font-family="Liberation Sans" font-size="13.2" fill="#3a3a3a" text-anchor="middle" >CPU &amp; RAM</text>
<text x="675" y="562.9" font-family="Liberation Sans" font-size="14" fill="#3a3a3a" text-anchor="middle" letter-spacing="0.6">eth0</text>
<text x="294.2" y="287" font-family="Liberation Sans" font-size="9.2" fill="#666" text-anchor="middle" >9:55 am</text>
<text x="296.2" y="516.8" font-family="Liberation Sans" font-size="9.2" fill="#666" text-anchor="middle" >9:55 am</text>
<text x="296.2" y="746.5" font-family="Liberation Sans" font-size="9.2" fill="#666" text-anchor="middle" >9:55 am</text>
<text x="361.8" y="287" font-family="Liberation Sans" font-size="9.2" fill="#666" text-anchor="middle" >10:00 am</text>
<text x="364.0" y="516.8" font-family="Liberation Sans" font-size="9.2" fill="#666" text-anchor="middle" >10:00 am</text>
<text x="364.0" y="746.5" font-family="Liberation Sans" font-size="9.2" fill="#666" text-anchor="middle" >10:00 am</text>
<text x="429.4" y="287" font-family="Liberation Sans" font-size="9.2" fill="#666" text-anchor="middle" >10:05 am</text>
<text x="431.8" y="516.8" font-family="Liberation Sans" font-size="9.2" fill="#666" text-anchor="middle" >10:05 am</text>
<text x="431.8" y="746.5" font-family="Liberation Sans" font-size="9.2" fill="#666" text-anchor="middle" >10:05 am</text>
<text x="497.0" y="287" font-family="Liberation Sans" font-size="9.2" fill="#666" text-anchor="middle" >10:10 am</text>
<text x="499.6" y="516.8" font-family="Liberation Sans" font-size="9.2" fill="#666" text-anchor="middle" >10:10 am</text>
<text x="499.6" y="746.5" font-family="Liberation Sans" font-size="9.2" fill="#666" text-anchor="middle" >10:10 am</text>
<text x="564.6" y="287" font-family="Liberation Sans" font-size="9.2" fill="#666" text-anchor="middle" >10:15 am</text>
<text x="567.4" y="516.8" font-family="Liberation Sans" font-size="9.2" fill="#666" text-anchor="middle" >10:15 am</text>
<text x="567.4" y="746.5" font-family="Liberation Sans" font-size="9.2" fill="#666" text-anchor="middle" >10:15 am</text>
<text x="632.2" y="287" font-family="Liberation Sans" font-size="9.2" fill="#666" text-anchor="middle" >10:20 am</text>
<text x="635.2" y="516.8" font-family="Liberation Sans" font-size="9.2" fill="#666" text-anchor="middle" >10:20 am</text>
<text x="635.2" y="746.5" font-family="Liberation Sans" font-size="9.2" fill="#666" text-anchor="middle" >10:20 am</text>
<text x="699.8" y="287" font-family="Liberation Sans" font-size="9.2" fill="#666" text-anchor="middle" >10:25 am</text>
<text x="703.0" y="516.8" font-family="Liberation Sans" font-size="9.2" fill="#666" text-anchor="middle" >10:25 am</text>
<text x="703.0" y="746.5" font-family="Liberation Sans" font-size="9.2" fill="#666" text-anchor="middle" >10:25 am</text>
<text x="767.4" y="287" font-family="Liberation Sans" font-size="9.2" fill="#666" text-anchor="middle" >10:30 am</text>
<text x="770.8" y="516.8" font-family="Liberation Sans" font-size="9.2" fill="#666" text-anchor="middle" >10:30 am</text>
<text x="770.8" y="746.5" font-family="Liberation Sans" font-size="9.2" fill="#666" text-anchor="middle" >10:30 am</text>
<text x="835.0" y="287" font-family="Liberation Sans" font-size="9.2" fill="#666" text-anchor="middle" >10:35 am</text>
<text x="838.6" y="516.8" font-family="Liberation Sans" font-size="9.2" fill="#666" text-anchor="middle" >10:35 am</text>
<text x="838.6" y="746.5" font-family="Liberation Sans" font-size="9.2" fill="#666" text-anchor="middle" >10:35 am</text>
<text x="902.6" y="287" font-family="Liberation Sans" font-size="9.2" fill="#666" text-anchor="middle" >10:40 am</text>
<text x="906.4" y="516.8" font-family="Liberation Sans" font-size="9.2" fill="#666" text-anchor="middle" >10:40 am</text>
<text x="906.4" y="746.5" font-family="Liberation Sans" font-size="9.2" fill="#666" text-anchor="middle" >10:40 am</text>
<text x="970.2" y="287" font-family="Liberation Sans" font-size="9.2" fill="#666" text-anchor="middle" >10:45 am</text>
<text x="974.2" y="516.8" font-family="Liberation Sans" font-size="9.2" fill="#666" text-anchor="middle" >10:45 am</text>
<text x="974.2" y="746.5" font-family="Liberation Sans" font-size="9.2" fill="#666" text-anchor="middle" >10:45 am</text>
<text x="1037.8" y="287" font-family="Liberation Sans" font-size="9.2" fill="#666" text-anchor="middle" >10:50 am</text>
<text x="1042.0" y="516.8" font-family="Liberation Sans" font-size="9.2" fill="#666" text-anchor="middle" >10:50 am</text>
<text x="1042.0" y="746.5" font-family="Liberation Sans" font-size="9.2" fill="#666" text-anchor="middle" >10:50 am</text>
<text x="276" y="128.0" font-family="Liberation Sans" font-size="9.2" fill="#666" text-anchor="end" >15 ms</text>
<text x="276" y="176.8" font-family="Liberation Sans" font-size="9.2" fill="#666" text-anchor="end" >10 ms</text>
<text x="276" y="225.7" font-family="Liberation Sans" font-size="9.2" fill="#666" text-anchor="end" >5 ms</text>
<text x="276" y="274.5" font-family="Liberation Sans" font-size="9.2" fill="#666" text-anchor="end" >0 ms</text>
<text x="278.5" y="357.8" font-family="Liberation Sans" font-size="8.3" fill="#666" text-anchor="end" >100%</text>
<text x="278.5" y="431.3" font-family="Liberation Sans" font-size="8.3" fill="#666" text-anchor="end" >50%</text>
<text x="278.5" y="504.8" font-family="Liberation Sans" font-size="8.3" fill="#666" text-anchor="end" >0%</text>
<text x="277" y="586.8" font-family="Liberation Sans" font-size="9" fill="#666" text-anchor="end" >60 Mbps</text>
<text x="277" y="636.8" font-family="Liberation Sans" font-size="9" fill="#666" text-anchor="end" >40 Mbps</text>
<text x="277" y="684.8" font-family="Liberation Sans" font-size="9" fill="#666" text-anchor="end" >20 Mbps</text>
<text x="277" y="733.8" font-family="Liberation Sans" font-size="9" fill="#666" text-anchor="end" >0 bps</text>
<text x="0" y="0" font-family="Liberation Sans" font-size="9.8" fill="#ebbd72" text-anchor="middle" transform="translate(240.6,198.3) rotate(-90)">Latency</text>
<text x="0" y="0" font-family="Liberation Sans" font-size="9" fill="#e07a7a" text-anchor="middle" transform="translate(1107.3,199) rotate(90)">Outage</text>
</svg>
</body></html>
